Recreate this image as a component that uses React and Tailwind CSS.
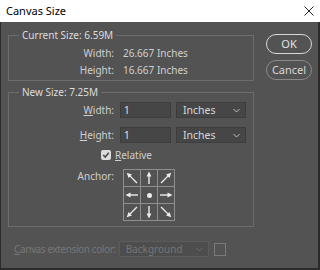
import React from 'react';

const font = "font-['Noto_Sans',sans-serif]";

function Chevron({ color = '#bdbdbd' }) {
  return (
    <svg width="7" height="5" viewBox="0 0 7 5" className="shrink-0">
      <path d="M0.5 1 L3.5 4 L6.5 1" fill="none" stroke={color} strokeWidth="1" />
    </svg>
  );
}

function Arrow({ angle }) {
  const diag = angle % 90 !== 0;
  return (
    <svg width="16" height="16" viewBox="0 0 16 16">
      <g transform={`rotate(${angle} 8 8)`}>
        <line x1="8" y1={diag ? 15 : 14} x2="8" y2="5" stroke="#ececec" strokeWidth="1.4" />
        <polygon points={diag ? '8,0.5 5.6,5.5 10.4,5.5' : '8,1.5 5.6,6.5 10.4,6.5'} fill="#ececec" />
      </g>
    </svg>
  );
}

function AnchorGrid() {
  const cells = [-45, 0, 45, -90, null, 90, -135, 180, 135];
  return (
    <div className="grid grid-cols-[16px_16px_16px] gap-px bg-[#8e8e8e] p-px">
      {cells.map((a, i) => (
        <div key={i} className="w-[16px] h-[16px] bg-[#535353] flex items-center justify-center">
          {a === null ? (
            <div className="w-[5px] h-[5px] rounded-full bg-[#ececec]" />
          ) : (
            <Arrow angle={a} />
          )}
        </div>
      ))}
    </div>
  );
}

function UnitSelect() {
  return (
    <div className="w-[70px] h-[16px] ml-[5px] bg-[#464646] border border-[#3d3d3d] flex items-center justify-between pl-[6px] pr-[5px] text-[#d6d6d6] text-[10.5px]">
      <span>Inches</span>
      <Chevron />
    </div>
  );
}

export default function App() {
  return (
    <div className={`w-[320px] h-[270px] flex flex-col text-[10px] leading-[14px] ${font}`}>
      {/* title bar */}
      <div className="h-[22px] bg-white flex items-center justify-between pl-[6px] pr-[6px] text-[11px] text-black">
        <span>Canvas Size</span>
        <svg width="10" height="10" viewBox="0 0 10 10">
          <path d="M0.5 0.5 L9.5 9.5 M9.5 0.5 L0.5 9.5" stroke="#222" strokeWidth="1" />
        </svg>
      </div>

      <div className="flex-1 bg-[#535353] border-l border-r-2 border-b-2 border-[#2b2b2b] flex pl-[7px]">
        <div className="w-[246px] flex flex-col pt-[6px]">
          {/* Current Size */}
          <fieldset className="border border-[#6c6c6c] pb-[2px]">
            <legend className="ml-[10px] px-[3px] text-[#dcdcdc]">Current Size: 6.59M</legend>
            <div className="pt-[2px] text-[#cfcfcf]">
              <div className="flex h-[17px] items-center">
                <span className="w-[105px] text-right">Width:</span>
                <span className="ml-[9px]">26.667 Inches</span>
              </div>
              <div className="flex h-[17px] items-center">
                <span className="w-[105px] text-right">Height:</span>
                <span className="ml-[9px]">16.667 Inches</span>
              </div>
            </div>
          </fieldset>

          {/* New Size */}
          <fieldset className="mt-[4px] border border-[#6c6c6c] pb-[5px]">
            <legend className="ml-[10px] px-[3px] text-[#dcdcdc]">New Size: 7.25M</legend>
            <div className="pt-[3px] text-[#cfcfcf]">
              <div className="flex h-[16px] items-center">
                <span className="w-[105px] text-right"><u>W</u>idth:</span>
                <div className="w-[51px] h-[16px] ml-[6px] bg-[#464646] border border-[#3d3d3d] flex items-center pl-[3px] text-[#e0e0e0]">1</div>
                <UnitSelect />
              </div>
              <div className="flex h-[16px] items-center mt-[9px]">
                <span className="w-[105px] text-right"><u>H</u>eight:</span>
                <div className="w-[51px] h-[16px] ml-[6px] bg-[#464646] border border-[#3d3d3d] flex items-center pl-[3px] text-[#e0e0e0]">1</div>
                <UnitSelect />
              </div>
              <div className="flex h-[14px] items-center mt-[5px] ml-[92px]">
                <div className="w-[10px] h-[10px] rounded-[2px] bg-[#dcdcdc] flex items-center justify-center">
                  <svg width="8" height="8" viewBox="0 0 8 8">
                    <path d="M1.2 4 L3.2 6 L6.8 1.8" fill="none" stroke="#4a4a4a" strokeWidth="1.6" />
                  </svg>
                </div>
                <span className="ml-[4px]"><u>R</u>elative</span>
              </div>
              <div className="flex mt-[7px]">
                <span className="w-[105px] text-right">Anchor:</span>
                <div className="ml-[9px]">
                  <AnchorGrid />
                </div>
              </div>
            </div>
          </fieldset>

          {/* Canvas extension color (disabled) */}
          <div className="flex items-center mt-[14px] text-[#767676]">
            <span className="ml-[6px] mr-[3px] whitespace-nowrap tracking-[-0.4px]"><u>C</u>anvas extension color:</span>
            <div className="w-[90px] h-[16px] bg-[#4d4d4d] border border-[#5c5c5c] flex items-center justify-between pl-[6px] pr-[5px]">
              <span>Background</span>
              <Chevron color="#6c6c6c" />
            </div>
            <div className="w-[12px] h-[13px] ml-[5px] border border-[#7a7a7a]" />
          </div>
        </div>

        {/* buttons */}
        <div className="w-[46px] ml-[12px] pt-[12px] flex flex-col gap-[6px] text-[11px]">
          <button className="h-[20px] rounded-full border-[1.5px] border-[#d8d8d8] text-[#e4e4e4] flex items-center justify-center">OK</button>
          <button className="h-[20px] rounded-full border border-[#8a8a8a] text-[#d8d8d8] flex items-center justify-center">Cancel</button>
        </div>
      </div>
    </div>
  );
}
